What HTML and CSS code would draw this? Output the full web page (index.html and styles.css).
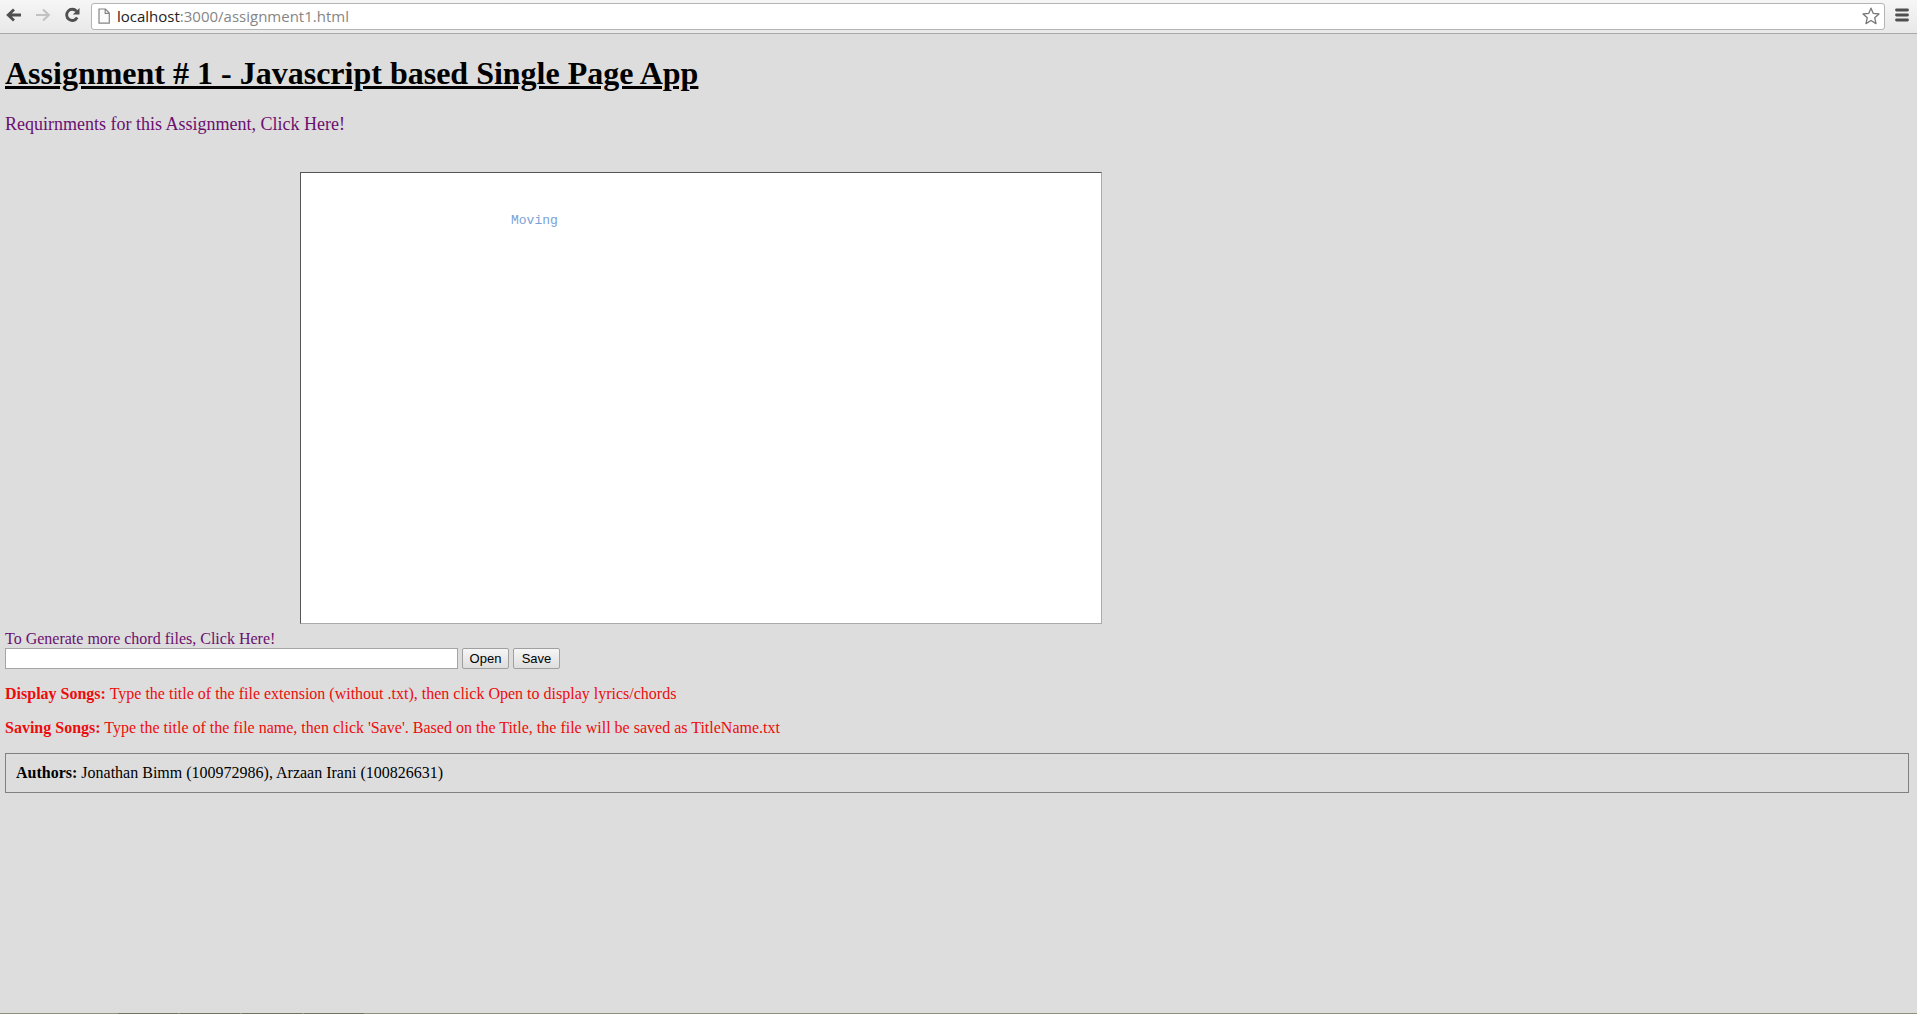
FILE: index.html
```html
<!DOCTYPE html>
<html lang="en">
<head>
<meta charset="utf-8">
<title>Assignment # 1</title>
<link rel="stylesheet" href="styles.css">
</head>
<body>
<header class="toolbar">
  <nav class="nav">
    <button class="icon-button" aria-label="Back"><svg width="16" height="14" viewBox="0 0 16 14"><path d="M15 7H3M8 1.5L2.2 7L8 12.500" fill="none" stroke="#4f4f4f" stroke-width="2.800"/></svg></button>
    <button class="icon-button" aria-label="Forward"><svg width="16" height="14" viewBox="0 0 16 14"><path d="M1 7H13M8 1.500L13.800 7L8 12.500" fill="none" stroke="#c2c2c2" stroke-width="2.200"/></svg></button>
    <button class="icon-button" aria-label="Reload"><svg width="16" height="16" viewBox="0 0 16 16"><path d="M12.500 4.200A5.600 5.600 0 1 0 13.200 10.500" fill="none" stroke="#4f4f4f" stroke-width="2.800"/><path d="M15.500 1V7.600H8.800Z" fill="#4f4f4f"/></svg></button>
  </nav>
  <div class="address">
    <svg class="page-icon" width="12" height="16" viewBox="0 0 12 16"><path d="M1 1H7.500L11.300 5V15.200H1ZM7.200 1V5.300H11.300" fill="#fbfbfb" stroke="#858585" stroke-width="1.200"/></svg>
    <div class="url" role="textbox" aria-label="Address" contenteditable="true" spellcheck="false"><span class="host">localhost</span>:3000/assignment1.html</div>
    <button class="icon-button" aria-label="Bookmark this page"><svg width="18" height="18" viewBox="0 0 18 18"><path d="M9 1.200L11.300 6.400L17 7L12.700 10.700L14 16.600L9 13.500L4 16.600L5.300 10.700L1 7L6.700 6.400Z" fill="#fff" stroke="#777" stroke-width="1.300" stroke-linejoin="round"/></svg></button>
  </div>
  <button class="icon-button" aria-label="Menu"><svg width="14" height="14" viewBox="0 0 14 14"><path d="M1.500 2H12.500M1.500 7H12.500M1.500 12H12.500" stroke="#4f4f4f" stroke-width="2.800" stroke-linecap="round"/></svg></button>
</header>
<main class="content">
  <h1 class="title">Assignment # 1 - Javascript based Single Page App</h1>
  <p class="requirements"><a class="link" href="#requirements">Requirnments for this Assignment, Click Here!</a></p>
  <section class="stage" aria-label="Song"><span class="word">Moving</span></section>
  <a class="link" href="#generate">To Generate more chord files, Click Here!</a>
  <form class="song-form">
    <input class="song-title" type="text" aria-label="Song title">
    <button class="action" type="button">Open</button>
    <button class="action" type="button">Save</button>
  </form>
  <p class="hint"><b>Display Songs:</b> Type the title of the file extension (without .txt), then click Open to display lyrics/chords</p>
  <p class="hint"><b>Saving Songs:</b> Type the title of the file name, then click 'Save'. Based on the Title, the file will be saved as TitleName.txt</p>
  <footer class="authors"><b>Authors:</b> Jonathan Bimm (100972986), Arzaan Irani (100826631)</footer>
</main>
<div class="taskbar"><i class="task"></i><i class="task"></i><i class="task"></i><i class="task"></i></div>
</body>
</html>
```
FILE: styles.css
```css
* {
  box-sizing: border-box;
}

body {
  display: flex;
  flex-direction: column;
  min-height: 100vh;
  margin: 0;
  background: #ddd;
  color: #000;
  font: 16px/18px "Liberation Serif", "Times New Roman", serif;
}

.toolbar {
  display: flex;
  align-items: center;
  gap: 10px;
  height: 34px;
  padding: 0 8px 3px 6px;
  border-bottom: 1px solid #a9a9a9;
  background: linear-gradient(#f6f6f6, #e8e8e8);
}

.nav {
  display: flex;
  align-items: center;
  gap: 13px;
  padding-right: 1px;
}

.icon-button {
  display: flex;
  padding: 0;
  border: 0;
  background: none;
}

.address {
  display: flex;
  flex: 1;
  align-items: center;
  gap: 7px;
  height: 27px;
  margin-top: 2px;
  padding: 0 4px 0 6px;
  border: 1px solid #b4b4b4;
  border-radius: 3px;
  background: #fff;
}

.url {
  flex: 1;
  color: #858585;
  font: 15px/22px "Open Sans", "Noto Sans", sans-serif;
}

.host {
  color: #222;
}

.content {
  display: flex;
  flex: 1;
  flex-direction: column;
  align-items: flex-start;
  padding: 0 8px 0 5px;
}

.title {
  margin: 21px 0 23px;
  font-size: 32px;
  line-height: 36px;
  text-decoration: underline;
}

.requirements {
  margin: 0 0 38px;
  font-size: 18px;
  line-height: 20px;
}

.link {
  color: #6b0f6f;
  text-decoration: none;
}

.stage {
  width: 802px;
  height: 452px;
  margin: 0 0 6px 295px;
  padding: 37px 210px;
  border: 1px solid;
  border-color: #555 #aaa #aaa #555;
  background: #fff;
}

.word {
  color: #7b9fd6;
  font: 13px/16px "Liberation Mono", "Courier New", monospace;
}

.song-form {
  display: flex;
  gap: 4px;
  margin-bottom: 16px;
}

.song-title {
  width: 453px;
  height: 21px;
  border: 1px solid #a5a5a5;
  background: #fff;
}

.action {
  width: 47px;
  padding: 0;
  border: 1px solid #a0a0a0;
  border-radius: 2px;
  background: linear-gradient(#f6f6f6, #dedede);
  color: #000;
  font: 13px/19px "Liberation Sans", Arial, sans-serif;
}

.hint {
  margin: 0 0 16px;
  color: #ec0c0c;
}

.authors {
  align-self: stretch;
  padding: 10px;
  border: 1px solid #808080;
}

.taskbar {
  display: flex;
  gap: 2px;
  height: 1px;
  padding-left: 118px;
  background: #8f917f;
}

.task {
  width: 60px;
  background: #727461;
}
```
